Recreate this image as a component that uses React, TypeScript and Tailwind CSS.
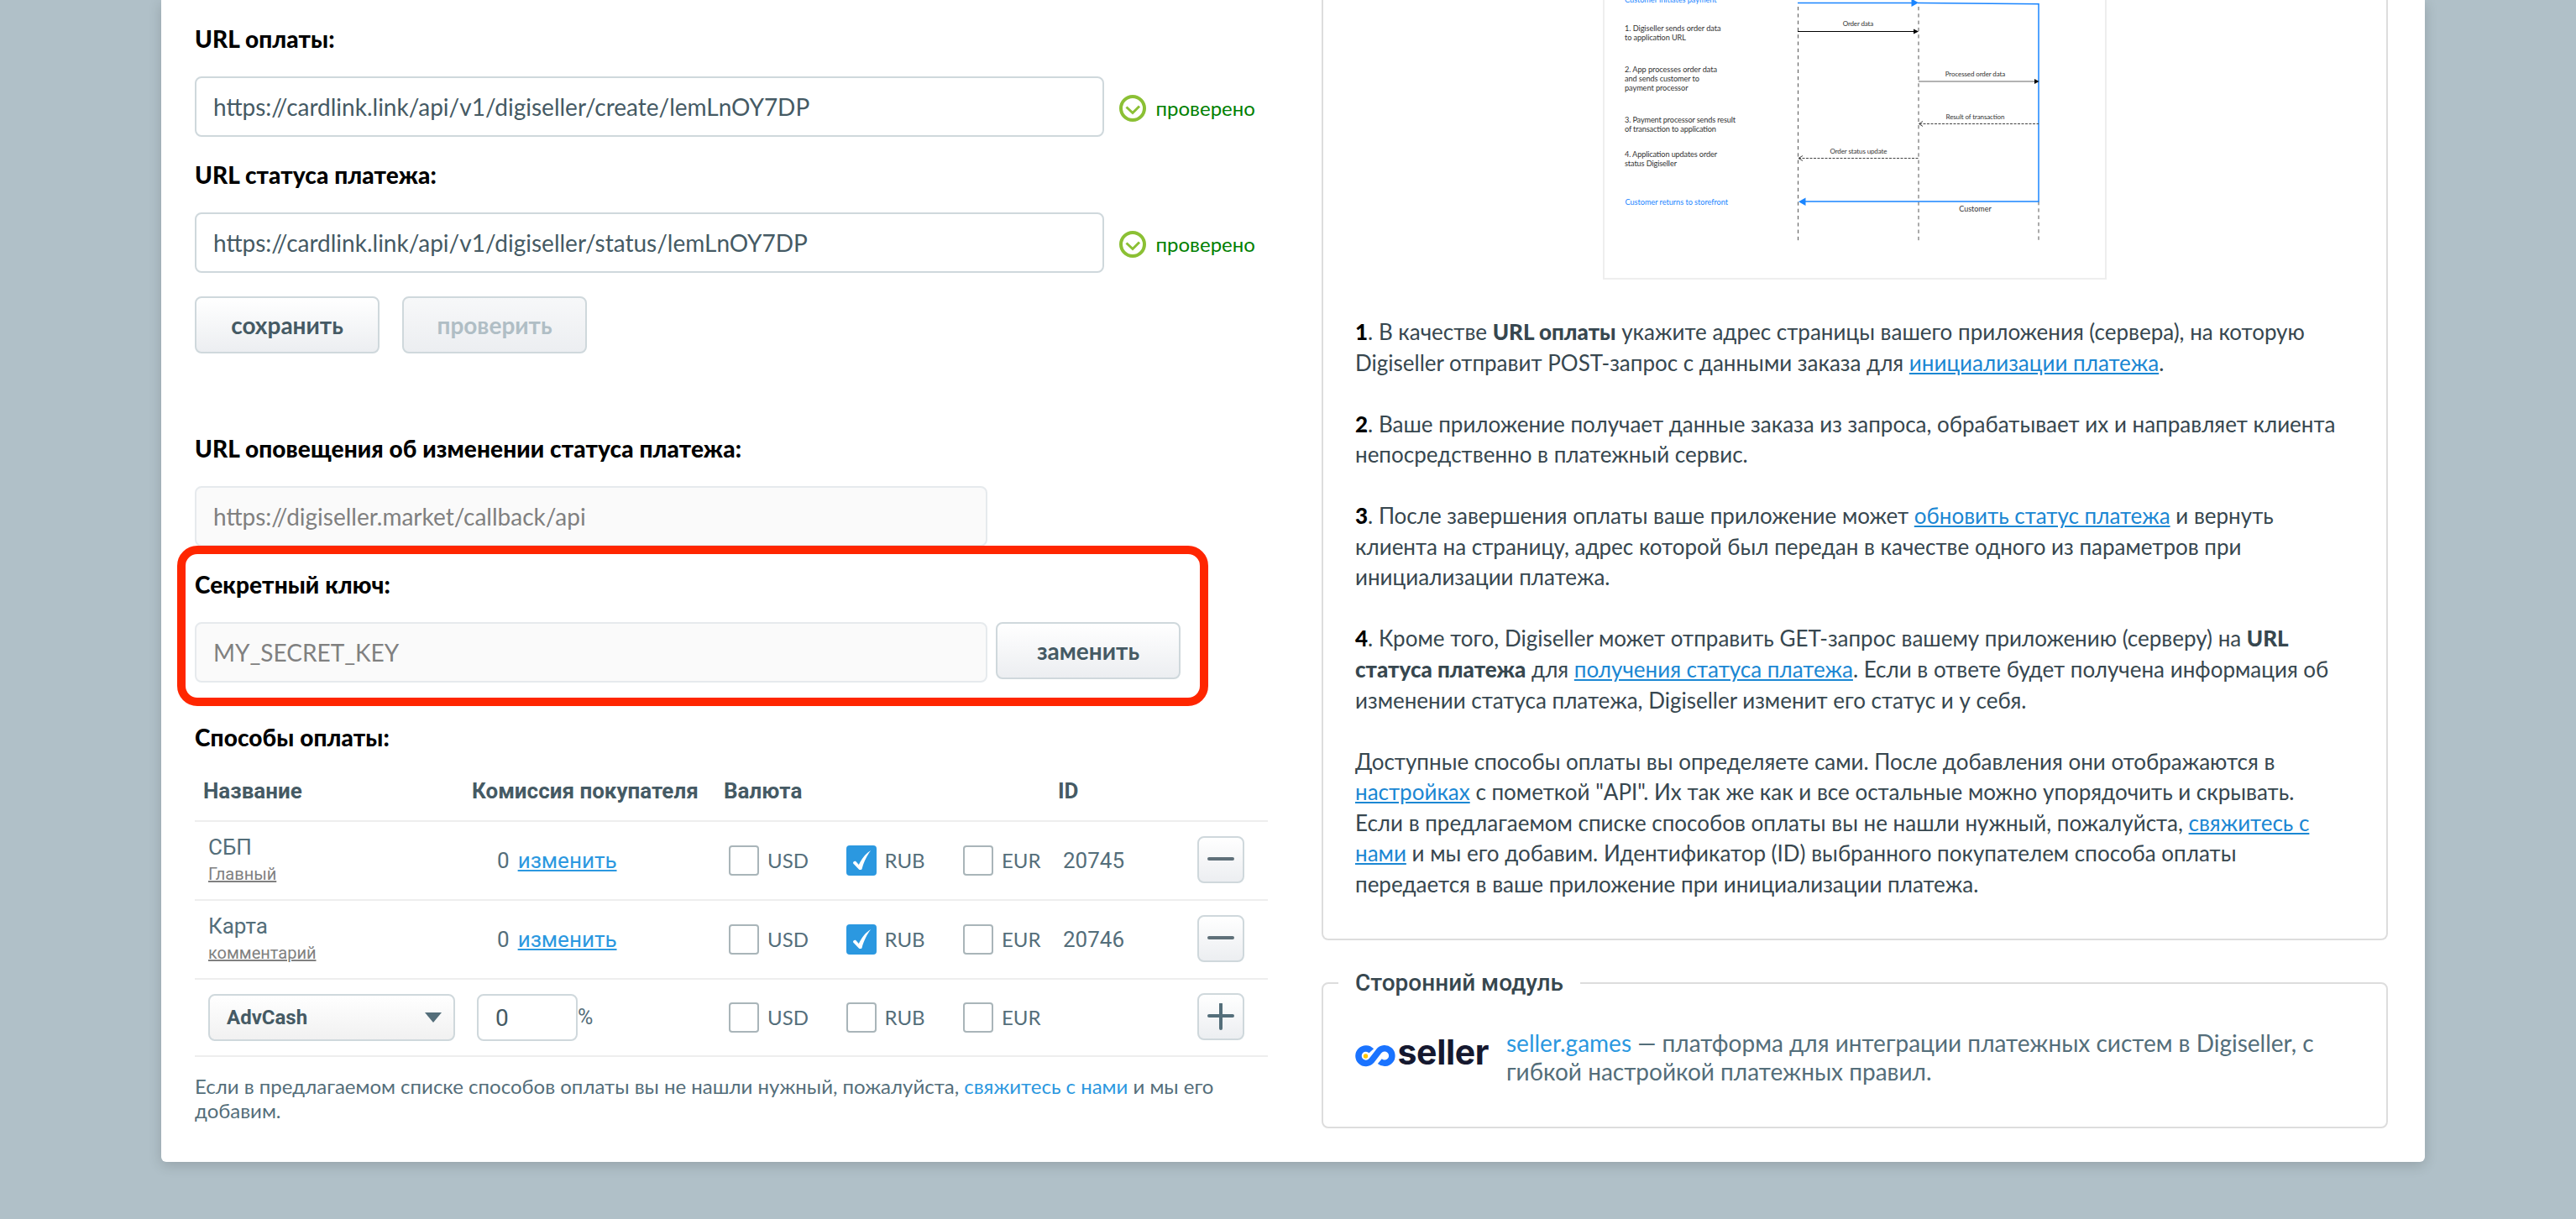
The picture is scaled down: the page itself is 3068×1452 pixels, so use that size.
import type { ReactNode } from 'react';

const currencies = ['USD', 'RUB', 'EUR'];

const methods = [
  { id: 20745, name: 'СБП', note: 'Главный', fee: 0, currency: 'RUB' },
  { id: 20746, name: 'Карта', note: 'комментарий', fee: 0, currency: 'RUB' },
];

const steps = [
  { y: 37, lines: ['1. Digiseller sends order data', 'to application URL'], widths: [114.5, 73] },
  { y: 86, lines: ['2. App processes order data', 'and sends customer to', 'payment processor'], widths: [110, 89, 75.5] },
  { y: 145.7, lines: ['3. Payment processor sends result', 'of transaction to application'], widths: [132, 109] },
  { y: 187, lines: ['4. Application updates order', 'status Digiseller'], widths: [110, 62] },
];

const rowGrid = 'grid grid-cols-[320px_300px_398px_160px_100px] border-b-2 border-[#eeeeee]';

const Label = ({ children }: { children: ReactNode }) => (
  <div className="h-[34px] text-[28px] leading-[34px] font-black tracking-[0.1px] text-black whitespace-nowrap">
    {children}
  </div>
);

const Field = ({ value, disabled }: { value: string; disabled?: boolean }) => (
  <input
    readOnly
    value={value}
    className={
      disabled
        ? 'block h-[72px] w-[944px] rounded-lg border-2 border-[#e6eaed] bg-[#fafafa] px-5 text-[28px] text-[#808080]'
        : 'block h-[72px] w-[1083px] rounded-lg border-2 border-[#cfd8dc] bg-white px-5 text-[28px] text-[#455a64]'
    }
  />
);

const Button = ({ children, disabled }: { children: ReactNode; disabled?: boolean }) => (
  <button
    className={
      disabled
        ? 'h-[68px] w-[220px] rounded-lg border-2 border-[#cfd8dc] bg-linear-to-b from-[#f7f8f9] to-[#eceef1] text-[28px] font-bold text-[#b0bec5]'
        : 'h-[68px] w-[220px] rounded-lg border-2 border-[#cfd8dc] bg-linear-to-b from-white to-[#eceef1] text-[28px] font-bold text-[#455a64]'
    }
  >
    {children}
  </button>
);

const Verified = () => (
  <div className="flex items-center ml-[17.5px] pt-1">
    <svg width="32" height="32" viewBox="0 0 32 32" fill="none" stroke="#8bc034">
      <circle cx="16" cy="16" r="14" strokeWidth="4" />
      <path d="M8.500 14.500l7.500 7 8-8" strokeWidth="3" />
    </svg>
    <span className="ml-3 text-[24px] leading-8 text-[#008000]">проверено</span>
  </div>
);

const Checkbox = ({ label, checked }: { label: string; checked?: boolean }) => (
  <div className="flex items-center w-[139.5px] shrink-0">
    {checked ? (
      <span className="size-9 rounded bg-[#2b98e0]">
        <svg width="36" height="36" viewBox="0 0 36 36" fill="#fff">
          <path d="M29.2 6C25 11 20.500 20 18.500 28.200c-.4 1-3 1.200-3.600.3L8.200 21.500c-.8-1.800 1.600-3.800 3.300-2.300l3.300 3.900C18 16 23 9.500 29.200 6z" />
        </svg>
      </span>
    ) : (
      <span className="size-9 rounded border-2 border-[#a9b5b9] bg-white" />
    )}
    <span className="ml-2.5 font-[Lato,sans-serif] text-[24px]">{label}</span>
  </div>
);

const Currencies = ({ active }: { active?: string }) => (
  <div className="flex items-center pl-4">
    {currencies.map((c) => (
      <Checkbox key={c} label={c} checked={c === active} />
    ))}
  </div>
);

const RowButton = ({ plus }: { plus?: boolean }) => (
  <div className="flex items-center pl-4 pb-[2px]">
    <button className="flex size-14 items-center justify-center rounded-lg border-2 border-[#cfd8dc] bg-linear-to-b from-white to-[#eceef1]">
      <svg width="32" height="32" viewBox="0 0 32 32" stroke={plus ? '#546e7a' : '#5f7079'} strokeWidth="4" strokeLinecap="round">
        <path d="M2 15H30" />
        {plus && <path d="M16 1V30" />}
      </svg>
    </button>
  </div>
);

const MethodsTable = () => (
  <div className="w-[1278px] font-[Roboto,sans-serif] text-[26px] leading-[30px] text-[#546e7a]">
    <div className={`${rowGrid} h-[84px] pt-8 font-bold text-[#455a64] whitespace-nowrap`}>
      <span className="pl-2.5">Название</span>
      <span className="pl-2.5">Комиссия покупателя</span>
      <span className="pl-2.5">Валюта</span>
      <span className="pl-2.5">ID</span>
    </div>

    {methods.map((m) => (
      <div key={m.id} className={`${rowGrid} h-[94px]`}>
        <div className="pl-4 pt-[14px]">
          <div className="leading-8">{m.name}</div>
          <div className="text-[20px] leading-8 text-[#808080] underline">{m.note}</div>
        </div>
        <div className="flex items-center pl-10">
          {m.fee}
          <a className="ml-2.5 text-[#2b98e0] underline">изменить</a>
        </div>
        <Currencies active={m.currency} />
        <div className="flex items-center pl-4">{m.id}</div>
        <RowButton />
      </div>
    ))}

    <div className={`${rowGrid} h-[92px]`}>
      <div className="flex items-center pl-4">
        <div className="flex h-14 w-[294px] items-center justify-between rounded-lg border-2 border-[#cfd8dc] bg-linear-to-b from-white to-[#f1f1f1] pl-5 pr-3.5 text-[24px] font-bold text-[#455a64]">
          AdvCash
          <svg width="20" height="12" viewBox="0 0 20 12" fill="#546e7a">
            <path d="M0 0H20L10 12z" />
          </svg>
        </div>
      </div>
      <div className="flex items-center pl-4 text-[25px]">
        <input
          readOnly
          value="0"
          className="h-14 w-[120px] rounded-lg border-2 border-[#cfd8dc] bg-white px-5 text-[28px] text-[#455a64]"
        />
        %
      </div>
      <Currencies />
      <span />
      <RowButton plus />
    </div>
  </div>
);

const Diagram = () => (
  <svg
    width="596"
    height="331"
    viewBox="1911 0 596 331"
    fontFamily="Lato, sans-serif"
    fontSize="9.2"
    fill="#333"
  >
    {/* lifelines */}
    <g stroke="#555" strokeWidth="1" strokeDasharray="4.3 4">
      <path d="M2141.500 8V289" />
      <path d="M2285 8V289" />
      <path d="M2428 240V289" />
    </g>

    {/* customer flow */}
    <g stroke="#1a85ff" strokeWidth="1.500" fill="none">
      <path d="M2141 3.500H2278" />
      <path d="M2284 3.500L2428 4.800V240H2148" />
    </g>
    <path d="M2276.500 -1.500V8L2285 3.300z" fill="#1a85ff" />
    <path d="M2150.500 235.500V245L2142 240.200z" fill="#1a85ff" />
    <text x="1935" y="3.300" textLength="109.500" fill="#1a85ff">Customer initiates payment</text>
    <text x="1935.500" y="244" textLength="122.500" fill="#1a85ff">Customer returns to storefront</text>

    {/* requests */}
    <path d="M2141 37.500H2280" stroke="#000" />
    <path d="M2279 34.500V40.500L2285 37.500z" fill="#000" />
    <path d="M2285 97H2424" stroke="#666" />
    <path d="M2423 94V100L2428.500 97z" fill="#000" />

    {/* responses */}
    <g stroke="#444" fill="none">
      <path d="M2286 147.500H2428" strokeDasharray="3 1.500" />
      <path d="M2142 188.500H2285" strokeDasharray="3 1.500" />
      <path d="M2290 144.500L2285.500 147.500L2290 150.500" />
      <path d="M2147 185.500L2142 188.500L2147 191.500" />
    </g>

    {steps.map((s) =>
      s.lines.map((line, i) => (
        <text key={line} x="1935" y={s.y + i * 11} textLength={s.widths[i]}>
          {line}
        </text>
      ))
    )}

    <g textAnchor="middle" fontSize="8">
      <text x="2213" y="31.300" textLength="36.500">Order data</text>
      <text x="2352.500" y="91" textLength="71.500">Processed order data</text>
      <text x="2352.500" y="142" textLength="70">Result of transaction</text>
      <text x="2213.500" y="183" textLength="68">Order status update</text>
      <text x="2352.500" y="252" textLength="38.500" fontSize="9">Customer</text>
    </g>
  </svg>
);

const DocLink = ({ children }: { children: ReactNode }) => (
  <a className="text-[#1b87d3] underline">{children}</a>
);

const Num = ({ children }: { children: ReactNode }) => <b className="font-black text-black">{children}</b>;

const Description = () => (
  <div className="h-[1120px] w-[1270px] rounded-b-lg border-2 border-t-0 border-[#dddddd] px-[38px]">
    <div className="mx-auto h-[333px] w-[600px] overflow-hidden border-2 border-t-0 border-[#eeeeee]">
      <Diagram />
    </div>
    <div className="mt-[44px] mr-3 flex flex-col gap-[36.55px] text-[26px] leading-[36.55px] text-[#37474f]">
      <p>
        <Num>1</Num>. В качестве <b className="font-black">URL оплаты</b> укажите адрес страницы вашего приложения
        (сервера), на которую Digiseller отправит POST-запрос с данными заказа для{' '}
        <DocLink>инициализации платежа</DocLink>.
      </p>
      <p>
        <Num>2</Num>. Ваше приложение получает данные заказа из запроса, обрабатывает их и направляет клиента
        непосредственно в платежный сервис.
      </p>
      <p>
        <Num>3</Num>. После завершения оплаты ваше приложение может <DocLink>обновить статус платежа</DocLink> и вернуть
        клиента на страницу, адрес которой был передан в качестве одного из параметров при инициализации платежа.
      </p>
      <p>
        <Num>4</Num>. Кроме того, Digiseller может отправить GET-запрос вашему приложению (серверу) на{' '}
        <b className="font-black">URL статуса платежа</b> для <DocLink>получения статуса платежа</DocLink>. Если в
        ответе будет получена информация об изменении статуса платежа, Digiseller изменит его статус и у себя.
      </p>
      <p>
        Доступные способы оплаты вы определяете сами. После добавления они отображаются в <DocLink>настройках</DocLink>{' '}
        с пометкой "API". Их так же как и все остальные можно упорядочить и скрывать. Если в предлагаемом списке
        способов оплаты вы не нашли нужный, пожалуйста, <DocLink>свяжитесь с нами</DocLink> и мы его добавим.
        Идентификатор (ID) выбранного покупателем способа оплаты передается в ваше приложение при инициализации платежа.
      </p>
    </div>
  </div>
);

const SellerLogo = () => (
  <svg width="160" height="40" viewBox="0 0 160 40" className="mt-[8px] shrink-0">
    <path
      d="M19.300 18.800A8.800 8.800 0 1 0 19.300 30.600L28.400 18.800A8.800 8.800 0 1 1 29.300 31.200"
      fill="none"
      stroke="#1a73ff"
      strokeWidth="7.500"
    />
    <circle cx="12.500" cy="25" r="2.700" fill="#ffc800" />
    <text x="50.500" y="35" textLength="109" fontFamily="Inter, sans-serif" fontSize="41" fontWeight="700" fill="#15182f">
      seller
    </text>
  </svg>
);

const Module = () => (
  <fieldset className="mt-[34px] h-[190px] w-[1270px] rounded-lg border-2 border-[#dddddd]">
    <legend className="ml-[18px] h-[34px] px-5 font-[Roboto,sans-serif] text-[28px] leading-[34px] font-medium text-[#37474f]">
      Сторонний модуль
    </legend>
    <div className="flex pl-[38px] pt-[36.5px]">
      <SellerLogo />
      <p className="ml-5 w-[990px] text-[28px] leading-[34px] text-[#546e7a]">
        <a className="text-[#2b98e0]">seller.games</a> — платформа для интеграции платежных систем в Digiseller, с
        гибкой настройкой платежных правил.
      </p>
    </div>
  </fieldset>
);

export default function App() {
  return (
    <div className="h-[1452px] w-full overflow-hidden bg-[#b0c0c8] font-[Lato,sans-serif]">
      <div className="ml-48 flex h-[1384px] w-[2696px] rounded-b-md bg-white pl-10 shadow-[0_4px_16px_rgba(0,0,0,0.16)]">
        <div className="w-[1342px] shrink-0 pt-[29px]">
          <Label>URL оплаты:</Label>
          <div className="mt-7 flex">
            <Field value="https://cardlink.link/api/v1/digiseller/create/lemLnOY7DP" />
            <Verified />
          </div>

          <div className="mt-7">
            <Label>URL статуса платежа:</Label>
          </div>
          <div className="mt-7 flex">
            <Field value="https://cardlink.link/api/v1/digiseller/status/lemLnOY7DP" />
            <Verified />
          </div>

          <div className="mt-7 flex gap-[27px]">
            <Button>сохранить</Button>
            <Button disabled>проверить</Button>
          </div>

          <div className="mt-24 mb-7">
            <Label>URL оповещения об изменении статуса платежа:</Label>
          </div>
          <Field disabled value="https://digiseller.market/callback/api" />

          <div className="relative mt-7">
            {/* highlight frame around the key */}
            <div className="pointer-events-none absolute -left-[21px] -top-[29px] h-[191px] w-[1228px] rounded-[24px] border-[10px] border-[#ff2600]" />
            <Label>Секретный ключ:</Label>
            <div className="mt-7 flex gap-2.5">
              <Field disabled value="MY_SECRET_KEY" />
              <Button>заменить</Button>
            </div>
          </div>

          <div className="mt-12">
            <Label>Способы оплаты:</Label>
          </div>
          <MethodsTable />

          <p className="mt-5 w-[1278px] text-[24px] leading-[29px] text-[#546e7a]">
            Если в предлагаемом списке способов оплаты вы не нашли нужный, пожалуйста,{' '}
            <a className="text-[#2b98e0]">свяжитесь с нами</a> и мы его добавим.
          </p>
        </div>

        <div className="shrink-0">
          <Description />
          <Module />
        </div>
      </div>
    </div>
  );
}
